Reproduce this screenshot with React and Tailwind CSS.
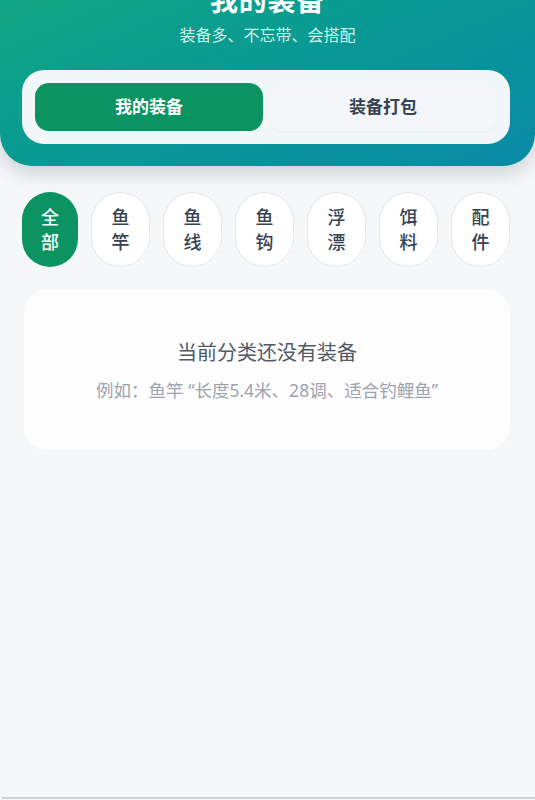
const categories = ["全部", "鱼竿", "鱼线", "鱼钩", "浮漂", "饵料", "配件"];

function CategoryPill({ label, active }) {
  const chars = label.split("");
  return (
    <button
      className={
        "flex flex-col items-center justify-center h-[75px] rounded-full text-[18px] leading-[25px] font-medium " +
        (active
          ? "w-[56px] bg-[#0b9462] text-white"
          : "w-[59px] bg-white text-[#374151] border-[1.5px] border-[#e3e6ea]")
      }
    >
      {chars.map((c, i) => (
        <span key={i}>{c}</span>
      ))}
    </button>
  );
}

export default function App() {
  return (
    <div
      className="-mt-[58px] h-[858px] flex flex-col bg-[#f6f7f9]"
      style={{ fontFamily: '"Noto Sans", "Noto Sans CJK SC", sans-serif' }}
    >
      <div className="pt-[40px] pb-[22px] rounded-b-[32px] bg-gradient-to-br from-[#14a97c] to-[#0a8aa6] shadow-[0_8px_18px_rgba(15,60,70,0.18)]">
        <h1 className="text-center text-white text-[28px] leading-[36px] font-bold tracking-wide">
          我的装备
        </h1>
        <p className="mt-[6px] text-center text-[16px] leading-[22px] text-[#d4f1ea]">
          装备多、不忘带、会搭配
        </p>

        <div className="mt-[24px] ml-[22px] mr-[25px] p-[13px] grid grid-cols-2 gap-[6px] rounded-[22px] bg-[#f1f7f8]">
          <button className="h-[48px] rounded-[14px] bg-[#0b9462] text-white text-[17px] font-bold">
            我的装备
          </button>
          <button className="h-[48px] rounded-[14px] bg-[#f4f7f9] text-[#374151] text-[17px] font-bold shadow-[0_1px_3px_rgba(0,0,0,0.04)]">
            装备打包
          </button>
        </div>
      </div>

      <div className="mt-[26px] ml-[22px] mr-[25px] flex gap-[13px]">
        {categories.map((c, i) => (
          <CategoryPill key={c} label={c} active={i === 0} />
        ))}
      </div>

      <div className="mt-[22px] ml-[24px] mr-[25px] pt-[50px] pb-[48px] rounded-[24px] bg-[#fdfdfe] text-center">
        <p className="text-[20px] leading-[28px] text-[#525a66]">
          当前分类还没有装备
        </p>
        <p className="mt-[11px] text-[17.5px] leading-[24px] text-[#9ca3af]">
          例如：鱼竿 “长度5.4米、28调、适合钓鲤鱼”
        </p>
      </div>

      <div className="mt-auto mb-[1px] ml-[2px] h-[2px] bg-[#cfd1d4]" />
    </div>
  );
}
